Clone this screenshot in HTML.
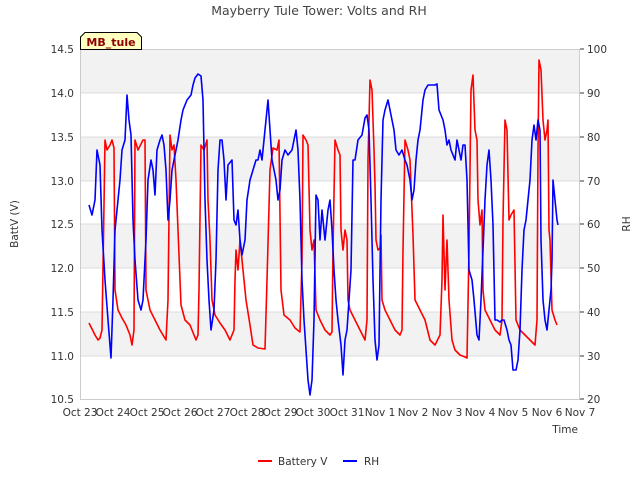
<!DOCTYPE html>
<html><head><style>
body{margin:0;background:#fff;width:640px;height:480px;overflow:hidden;font-family:"DejaVu Sans","Liberation Sans",sans-serif;}
</style></head><body>
<svg width="640" height="480" xmlns="http://www.w3.org/2000/svg" font-family="DejaVu Sans, Liberation Sans, sans-serif">
<rect x="80" y="49" width="500" height="44" fill="#f2f2f2"/>
<rect x="80" y="137" width="500" height="44" fill="#f2f2f2"/>
<rect x="80" y="224" width="500" height="44" fill="#f2f2f2"/>
<rect x="80" y="312" width="500" height="44" fill="#f2f2f2"/>
<g stroke="#dcdcdc" stroke-width="1">
<line x1="80" y1="93" x2="580" y2="93"/><line x1="80" y1="137" x2="580" y2="137"/>
<line x1="80" y1="181" x2="580" y2="181"/><line x1="80" y1="224" x2="580" y2="224"/>
<line x1="80" y1="268" x2="580" y2="268"/><line x1="80" y1="312" x2="580" y2="312"/>
<line x1="80" y1="356" x2="580" y2="356"/>
</g>
<rect x="80.5" y="49.5" width="499" height="350" fill="none" stroke="#ccc"/>
<polyline fill="none" stroke="#ff0000" stroke-width="1.6" stroke-linejoin="round" points="89,323 95,335 98,340 100,338 102,330 104,205 105,140 107,150 110,145 112,140 114,148 115,290 118,310 122,318 126,325 130,335 132,345 134,330 135,140 138,150 143,140 145,140 146,290 150,310 155,320 160,330 166,340 168,300 170,135 172,150 174,145 176,180 178,230 180,280 181,305 185,320 190,325 196,340 198,335 199,290 201,145 204,150 207,140 208,200 210,240 212,300 215,315 220,323 225,330 230,340 234,330 235,280 236,250 238,270 240,240 242,260 244,280 246,300 250,325 253,345 258,348 265,349 267,280 270,170 273,148 277,150 279,140 281,290 284,315 290,320 295,328 300,332 302,260 303,135 306,140 308,145 310,230 312,250 314,240 316,310 320,320 325,330 330,335 332,332 333,250 335,140 338,150 340,155 341,230 343,250 345,230 347,240 348,300 350,310 355,320 360,330 365,340 367,320 368,160 370,80 372,90 374,150 375,185 376,240 378,250 380,248 381,235 382,300 385,310 390,320 395,330 400,335 402,330 403,250 405,140 408,150 410,160 413,235 415,300 420,310 425,320 430,340 435,345 440,335 442,280 443,215 445,290 447,240 449,300 452,340 455,350 460,355 465,357 467,358 469,250 471,90 473,75 475,130 477,140 478,200 480,225 482,210 483,290 485,310 490,320 495,330 500,335 502,320 503,220 505,120 507,130 509,220 511,215 514,210 516,320 520,330 525,335 530,340 535,345 537,320 538,150 539,60 541,70 543,120 545,140 547,130 548,120 549,230 550,240 552,310 555,320 557,325"/>
<polyline fill="none" stroke="#0000ff" stroke-width="1.6" stroke-linejoin="round" points="89,205 92,215 95,200 97,150 100,165 102,230 105,280 108,320 111,358 113,300 115,230 118,200 120,180 122,150 125,140 127,95 129,120 131,135 133,220 135,260 138,300 141,310 143,300 146,240 148,180 151,160 153,170 155,195 157,150 160,140 162,135 164,145 166,170 168,220 170,200 172,170 174,160 176,150 178,140 181,120 183,110 185,105 187,100 191,95 193,85 195,78 198,74 201,76 203,100 205,200 207,260 209,300 211,330 214,310 216,260 218,170 220,140 222,140 224,160 226,200 228,165 232,160 234,220 236,225 238,210 240,240 242,255 245,240 247,200 250,180 253,170 256,160 258,160 260,150 262,160 264,140 266,120 268,100 270,130 272,160 274,170 276,180 278,200 280,190 282,160 285,150 288,155 292,150 294,140 296,130 298,150 300,200 302,280 304,320 306,350 308,380 310,395 312,380 314,320 316,195 318,200 320,240 322,210 325,240 328,210 330,200 332,230 334,270 336,300 338,320 341,345 343,375 345,340 347,330 349,300 351,270 353,160 355,160 358,140 362,135 365,118 367,115 369,130 371,200 373,280 375,340 377,360 379,345 381,200 383,120 385,110 388,100 390,110 392,120 394,130 396,150 399,155 402,150 405,160 407,165 410,180 412,200 414,190 416,160 418,140 420,130 423,100 425,90 428,85 432,85 435,85 437,84 439,110 441,115 443,120 445,130 447,145 449,140 451,150 453,155 455,160 457,140 459,150 461,160 463,145 465,145 467,180 469,270 472,280 474,300 477,335 479,340 481,300 483,250 485,200 487,165 489,150 491,180 493,225 495,320 497,320 500,322 502,320 504,320 507,330 509,340 511,345 513,370 516,370 518,360 520,330 522,270 524,230 526,220 528,200 530,180 532,140 534,125 536,140 538,120 540,130 541,240 543,300 545,320 547,330 549,310 551,290 552,260 553,180 555,200 557,220 558,225"/>
<g font-size="10.5" fill="#333" text-anchor="end">
<text x="74" y="53">14.5</text><text x="74" y="97">14.0</text><text x="74" y="141">13.5</text>
<text x="74" y="185">13.0</text><text x="74" y="228">12.5</text><text x="74" y="272">12.0</text>
<text x="74" y="316">11.5</text><text x="74" y="360">11.0</text><text x="74" y="403">10.5</text>
</g>
<g stroke="#333"><line x1="580" y1="49" x2="584" y2="49"/><line x1="580" y1="93" x2="584" y2="93"/><line x1="580" y1="137" x2="584" y2="137"/><line x1="580" y1="181" x2="584" y2="181"/><line x1="580" y1="224" x2="584" y2="224"/><line x1="580" y1="268" x2="584" y2="268"/><line x1="580" y1="312" x2="584" y2="312"/><line x1="580" y1="356" x2="584" y2="356"/><line x1="580" y1="399" x2="584" y2="399"/></g>
<g font-size="10.5" fill="#333">
<text x="587" y="53">100</text><text x="587" y="97">90</text><text x="587" y="141">80</text>
<text x="587" y="185">70</text><text x="587" y="228">60</text><text x="587" y="272">50</text>
<text x="587" y="316">40</text><text x="587" y="360">30</text><text x="587" y="403">20</text>
</g>
<g font-size="10.5" fill="#333" text-anchor="middle">
<text x="80" y="416">Oct 23</text><text x="113" y="416">Oct 24</text><text x="147" y="416">Oct 25</text>
<text x="180" y="416">Oct 26</text><text x="213" y="416">Oct 27</text><text x="247" y="416">Oct 28</text>
<text x="280" y="416">Oct 29</text><text x="313" y="416">Oct 30</text><text x="347" y="416">Oct 31</text>
<text x="380" y="416">Nov 1</text><text x="413" y="416">Nov 2</text><text x="447" y="416">Nov 3</text>
<text x="480" y="416">Nov 4</text><text x="513" y="416">Nov 5</text><text x="547" y="416">Nov 6</text>
<text x="580" y="416">Nov 7</text>
</g>
<text x="578" y="433" font-size="10.5" fill="#333" text-anchor="end">Time</text>
<text x="319" y="15" font-size="12.5" fill="#444" text-anchor="middle">Mayberry Tule Tower: Volts and RH</text>
<text transform="translate(18,224) rotate(-90)" font-size="10.5" fill="#333" text-anchor="middle">BattV (V)</text>
<text transform="translate(630,224) rotate(-90)" font-size="10.5" fill="#333" text-anchor="middle">RH</text>
<path d="M80.5,49.5 L80.5,37 L85,32.5 L137,32.5 L141.5,37 L141.5,49.5 Z" fill="#ffffc0" stroke="#000"/>
<text x="111" y="46" font-size="11" font-weight="bold" fill="#8b0000" text-anchor="middle">MB_tule</text>
<line x1="258" y1="461" x2="272" y2="461" stroke="#ff0000" stroke-width="2"/>
<text x="278" y="465" font-size="10.5" fill="#333">Battery V</text>
<line x1="343" y1="461" x2="357" y2="461" stroke="#0000ff" stroke-width="2"/>
<text x="364" y="465" font-size="10.5" fill="#333">RH</text>
</svg>
</body></html>
